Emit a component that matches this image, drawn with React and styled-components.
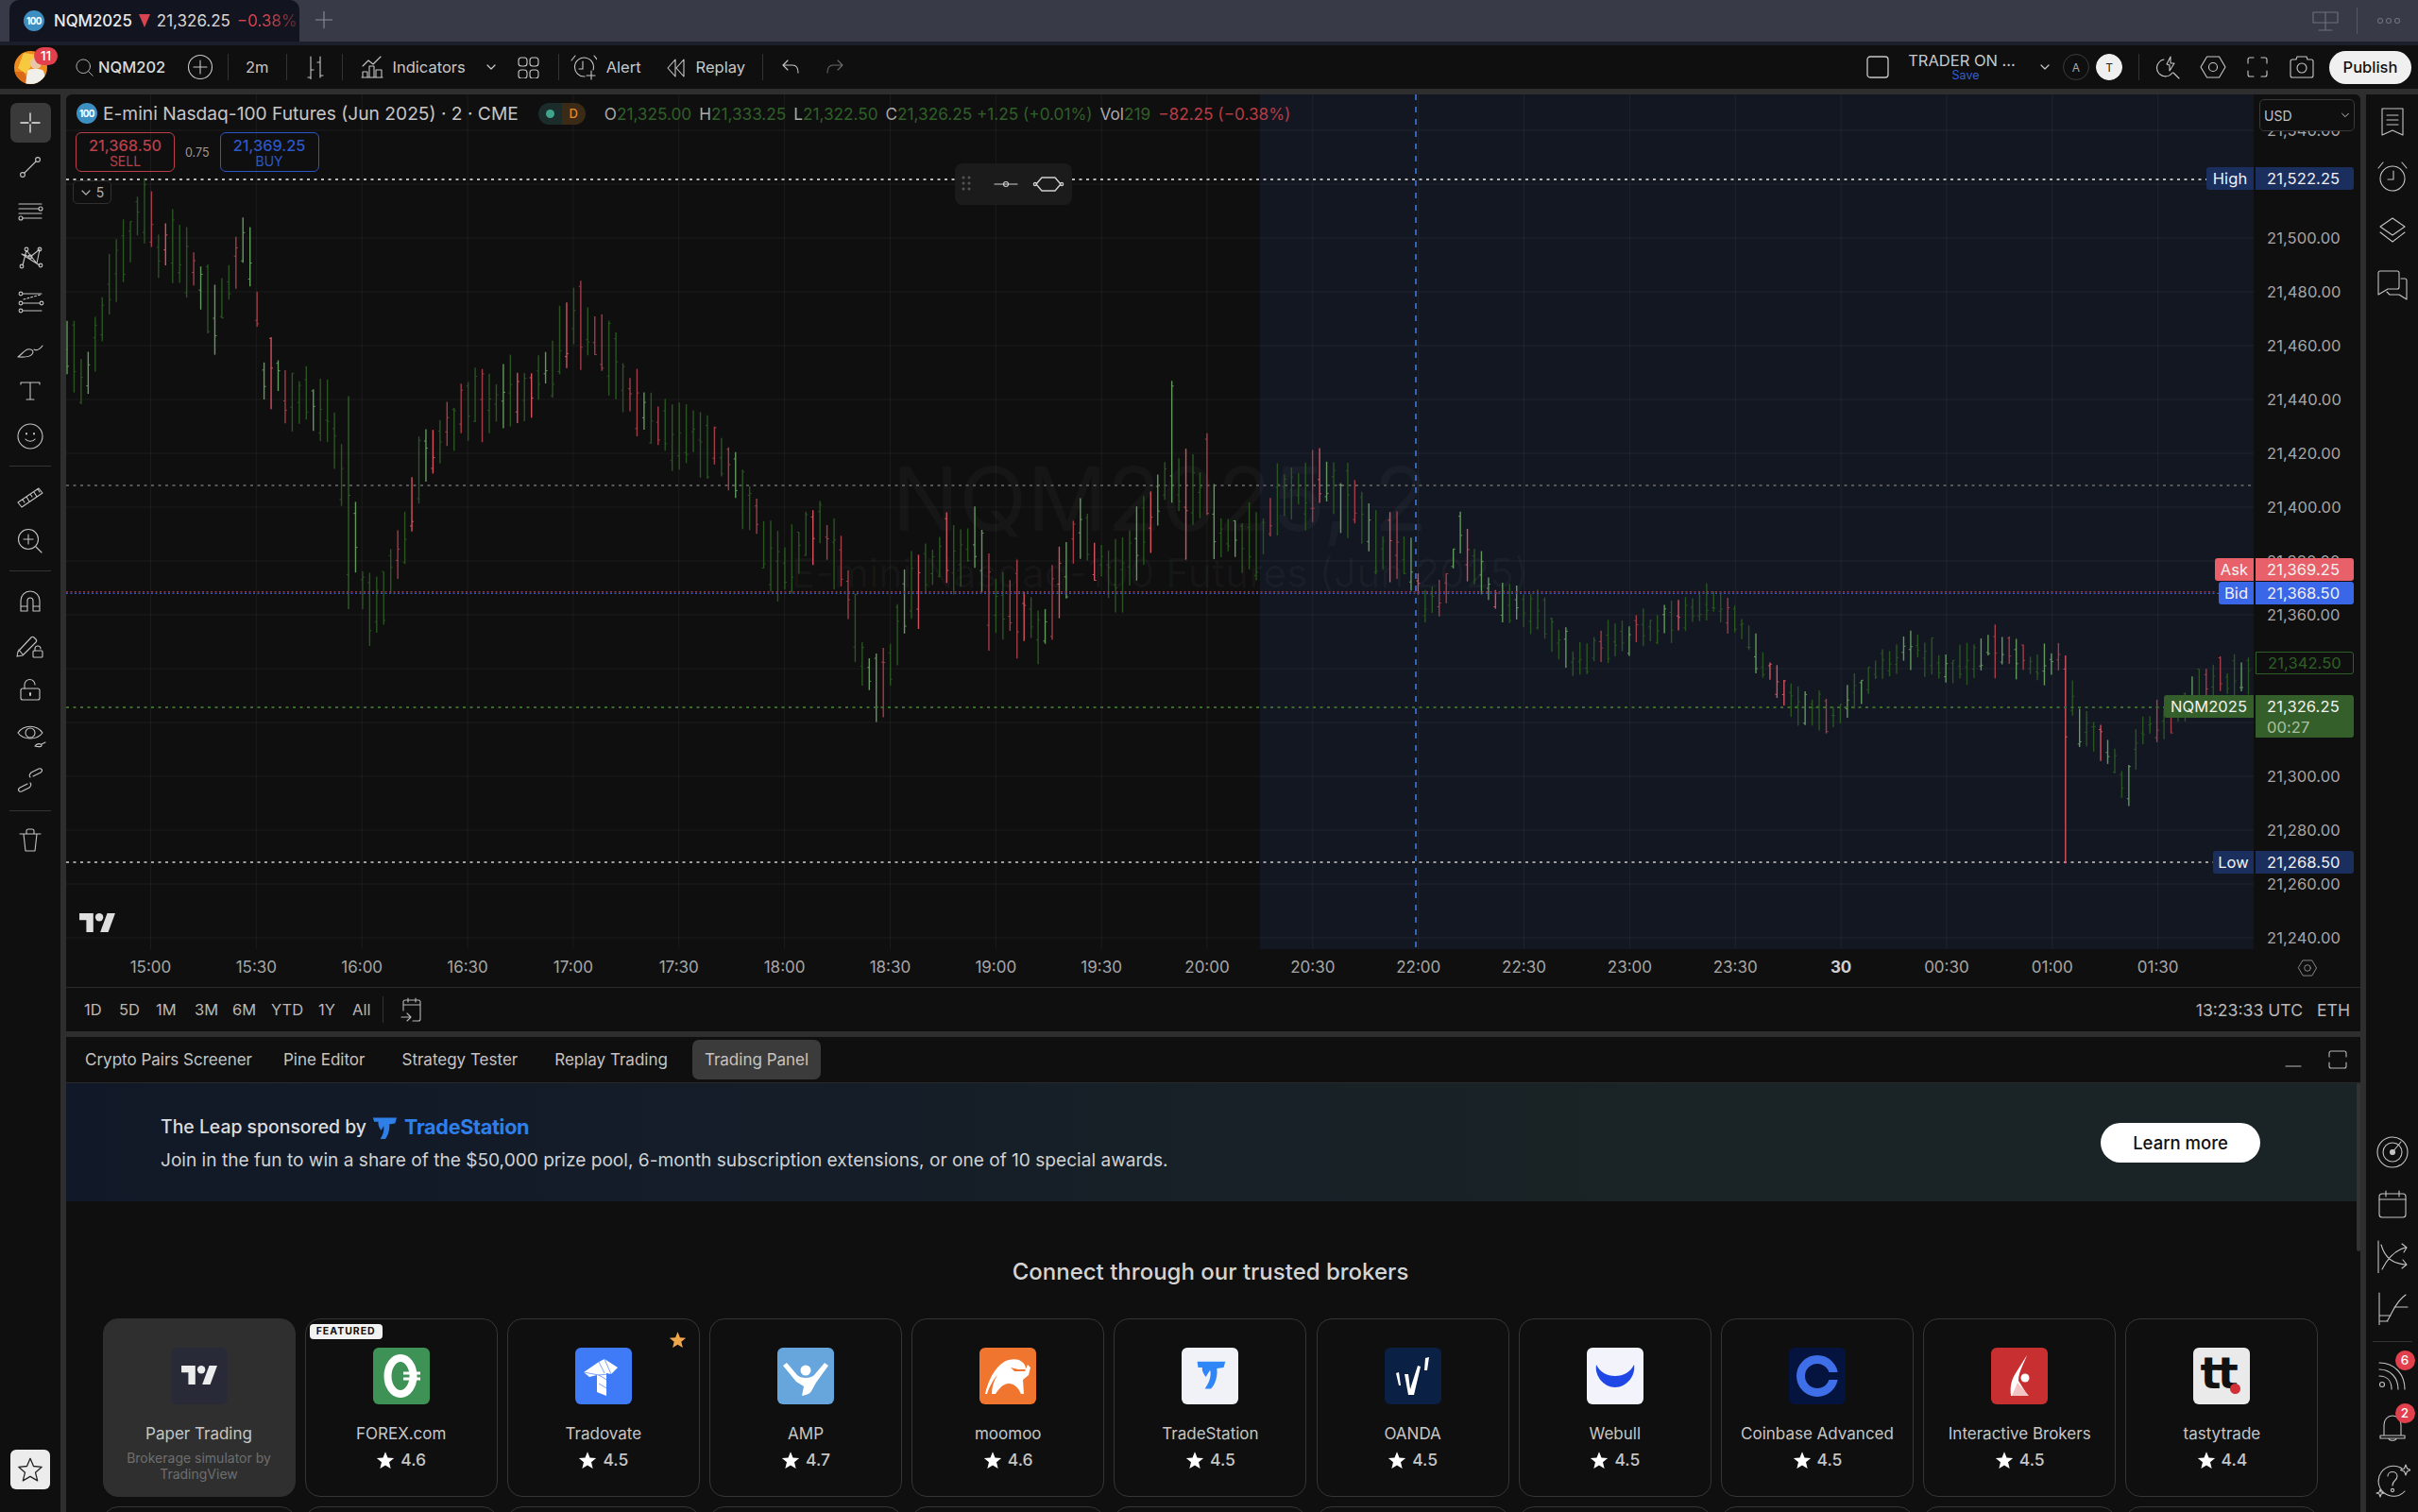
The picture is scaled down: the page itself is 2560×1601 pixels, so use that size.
import React from "react";
import styled, { createGlobalStyle } from "styled-components";

const GlobalStyle = createGlobalStyle`
  html, body { margin: 0; padding: 0; background: #2e2e2e; }
  body { font-family: Inter, "Liberation Sans", sans-serif; color: #d0d0d0; }
  * { box-sizing: border-box; }
`;

// chart scale: 57px per 20 points, 21,500 sits 152px below the top of the canvas
const priceY = (p) => 152 + ((21500 - p) / 20) * 57;
const SCALE = 2560 / 1568;

const TIMES = ["15:00","15:30","16:00","16:30","17:00","17:30","18:00","18:30","19:00","19:30","20:00","20:30","22:00","22:30","23:00","23:30","30","00:30","01:00","01:30"];
const timeX = (i) => 89.5 + i * 111.85;
const GRID_PRICES = [21540,21520,21500,21480,21460,21440,21420,21400,21380,21360,21340,21320,21300,21280,21260,21240];
const AXIS_PRICES = [21540,21500,21480,21460,21440,21420,21400,21380,21360,21300,21280,21260,21240];

// rough midline of the bars, in the 1568-wide coordinates of the reference overview
const PATH = [[43,219],[56,251],[69,196],[78,173],[93,129],[102,159],[124,170],[139,208],[147,192],[161,151],[170,239],[186,257],[213,263],[225,325],[240,400],[257,365],[266,331],[276,294],[317,255],[345,257],[375,205],[395,230],[420,270],[440,280],[465,290],[490,335],[500,366],[513,360],[519,351],[531,337],[545,360],[559,437],[571,447],[578,431],[586,392],[604,369],[633,349],[641,392],[659,396],[674,412],[686,382],[700,341],[714,366],[733,369],[751,325],[760,286],[768,326],[778,318],[792,349],[806,352],[815,353],[824,333],[842,320],[856,306],[865,320],[884,337],[898,355],[914,357],[925,396],[938,378],[947,347],[961,374],[974,392],[997,396],[1010,418],[1021,429],[1057,412],[1090,400],[1110,392],[1130,405],[1150,440],[1175,465],[1195,460],[1215,437],[1240,420],[1265,435],[1293,420],[1315,430],[1335,428],[1350,475],[1365,480],[1378,515],[1390,472],[1410,465],[1430,442],[1462,437]];
const SPIKES = [[225,257,395,"#2f5f28"],[376,182,240,"#a33d48"],[641,359,422,"#a33d48"],[659,363,427,"#a33d48"],[760,247,326,"#63985f"],[768,291,363,"#d4525f"],[782,281,334,"#a33d48"],[952,343,377,"#d4525f"],[1293,405,440,"#a33d48"],[1340,425,560,"#d4525f"]];

const interp = (x) => {
  for (let i = 1; i < PATH.length; i++) {
    if (x <= PATH[i][0]) {
      const [x0, y0] = PATH[i - 1];
      const [x1, y1] = PATH[i];
      return y0 + ((y1 - y0) * (x - x0)) / (x1 - x0);
    }
  }
  return PATH[PATH.length - 1][1];
};

const rng = (seed) => () => {
  seed |= 0; seed = (seed + 0x6d2b79f5) | 0;
  let t = Math.imul(seed ^ (seed >>> 15), 1 | seed);
  t = (t + Math.imul(t ^ (t >>> 7), 61 | t)) ^ t;
  return ((t ^ (t >>> 14)) >>> 0) / 4294967296;
};

const makeBars = () => {
  const r = rng(41);
  const out = [];
  for (let x = 1; x < 2314; x += 7.45) {
    const dx = (x + 70) / SCALE;
    const mid = interp(dx) * SCALE - 100 + (r() - 0.5) * (x < 1430 ? 24 : 12);
    const half = x < 1430 ? 16 + r() * 24 : 9 + r() * 14;
    const v = r();
    let color = v < 0.62 ? "#2a5523" : v < 0.8 ? "#63985f" : v < 0.92 ? "#a33d48" : "#d4525f";
    let top = mid - half;
    let bottom = mid + half;
    const spike = SPIKES.find((s) => Math.abs(s[0] - dx) < 2.3);
    if (spike) {
      top = spike[1] * SCALE - 100;
      bottom = spike[2] * SCALE - 100;
      color = spike[3];
    }
    const h = bottom - top;
    out.push({ x, top, bottom, color, open: top + r() * h, close: top + r() * h });
  }
  return out;
};
const BARS = makeBars();

const Page = styled.div`
  width: 2560px;
  height: 1601px;
  overflow: hidden;
  display: flex;
  flex-direction: column;
  background: #2e2e2e;
`;

const TabBar = styled.div`
  height: 44px;
  display: flex;
  align-items: flex-end;
  padding-left: 10px;
  background: #383a47;
  color: #8a8c96;
`;
const TabStrip = styled.div`
  height: 4px;
  background: #1b1e2b;
`;
const Tab = styled.div`
  width: 307px;
  height: 44px;
  display: flex;
  align-items: center;
  gap: 7px;
  padding-left: 15px;
  border-radius: 10px 10px 0 0;
  background: #12151f;
  font-size: 17px;
  color: #d8d8d8;
  white-space: nowrap;
  overflow: hidden;
`;
const TabName = styled.span`
  margin-left: 3px;
  font-weight: 500;
  font-size: 16.8px;
  color: #ececec;
`;
const TabTriangle = styled.span`
  width: 0;
  height: 0;
  border-left: 6px solid transparent;
  border-right: 6px solid transparent;
  border-top: 14px solid #d8444f;
`;
const TabChange = styled.span`
  color: transparent;
  background: linear-gradient(90deg, #d8444f 50%, #4a2a33 100%);
  -webkit-background-clip: text;
  background-clip: text;
`;
const TabPlus = styled.div`
  margin: 0 0 2px 6px;
  width: 40px;
  height: 42px;
  display: flex;
  align-items: center;
  justify-content: center;
`;
const TabBarEnd = styled.div`
  margin-left: auto;
  height: 44px;
  display: flex;
  align-items: center;
  gap: 18px;
  padding-right: 16px;
  color: #6e707c;
`;
const TabBarRule = styled.div`
  width: 1px;
  height: 28px;
  background: #565863;
`;

const Badge100 = styled.div`
  width: ${(p) => p.$size}px;
  height: ${(p) => p.$size}px;
  flex: none;
  border-radius: 50%;
  background: #3d8fc2;
  color: #fff;
  display: flex;
  align-items: center;
  justify-content: center;
  font-size: ${(p) => p.$size * 0.45}px;
  font-weight: 700;
  letter-spacing: -0.5px;
`;

const TopBar = styled.div`
  height: 46px;
  display: flex;
  align-items: center;
  justify-content: space-between;
  padding-right: 7px;
  background: #0f0f0f;
  color: #c8c8c8;
`;
const BarGroup = styled.div`
  display: flex;
  align-items: center;
  height: 100%;
`;
const BarItem = styled.div`
  display: flex;
  align-items: center;
  gap: ${(p) => p.$gap || 0}px;
  margin-left: ${(p) => p.$ml || 0}px;
  font-size: 16.5px;
  white-space: nowrap;
  color: ${(p) => (p.$dim ? "#6a6a6a" : "inherit")};
`;
const BarRule = styled.div`
  width: 1px;
  height: 28px;
  margin-left: ${(p) => p.$ml || 0}px;
  background: #333;
`;
const Avatar = styled.div`
  position: relative;
  margin-left: 15px;
  width: 35px;
  height: 35px;
  line-height: 0;
`;
const CountBadge = styled.span`
  position: absolute;
  top: ${(p) => p.$top}px;
  right: ${(p) => p.$right}px;
  min-width: ${(p) => p.$w}px;
  height: ${(p) => p.$h}px;
  padding: 0 3px;
  border-radius: 12px;
  background: #e2404c;
  color: #fff;
  font-size: 13.5px;
  font-weight: 500;
  line-height: ${(p) => p.$h}px;
  text-align: center;
`;
const SymbolName = styled.span`
  width: 72px;
  overflow: hidden;
  font-weight: 500;
  font-size: 16.5px;
  color: #dcdcdc;
`;
const LayoutName = styled.div`
  display: flex;
  flex-direction: column;
  align-items: center;
  width: 116px;
  margin-left: 18px;
  font-size: 16.5px;
  line-height: 17px;
  color: #c8c8c8;
`;
const SaveLink = styled.span`
  font-size: 12.5px;
  line-height: 13px;
  color: #2f5fd8;
  padding-left: 8px;
`;
const Round = styled.div`
  width: 28px;
  height: 28px;
  margin-left: ${(p) => p.$ml}px;
  border-radius: 50%;
  display: flex;
  align-items: center;
  justify-content: center;
  font-size: 12px;
  border: 1px solid ${(p) => (p.$on ? "#efefef" : "#3c3c3c")};
  background: ${(p) => (p.$on ? "#efefef" : "transparent")};
  color: ${(p) => (p.$on ? "#222" : "#aaa")};
`;
const PublishButton = styled.button`
  width: 87px;
  height: 35px;
  margin-left: 15px;
  border: 0;
  border-radius: 18px;
  background: #f0f0f0;
  color: #111;
  font: 500 16.5px Inter, sans-serif;
`;

const Main = styled.div`
  margin-top: 6px;
  flex: 1;
  min-height: 0;
  display: flex;
  gap: 6px;
`;

const LeftRail = styled.div`
  width: 64px;
  display: flex;
  flex-direction: column;
  align-items: center;
  gap: 5.4px;
  padding: 9px 0 24px;
  background: #0f0f0f;
  color: #c4c4c4;
`;
const RailButton = styled.div`
  width: 43px;
  height: 42px;
  flex: none;
  display: flex;
  align-items: center;
  justify-content: center;
  border-radius: 7px;
  background: ${(p) => (p.$active ? "#3a3a3a" : "transparent")};
  color: ${(p) => (p.$active ? "#ececec" : "inherit")};
`;
const RailRule = styled.div`
  width: 44px;
  height: 1px;
  flex: none;
  margin: 5px 0;
  background: #333;
`;
const FavButton = styled.div`
  margin-top: auto;
  width: 42px;
  height: 42px;
  display: flex;
  align-items: center;
  justify-content: center;
  border-radius: 6px;
  background: #ececec;
  color: #222;
`;

const Center = styled.div`
  width: 2429px;
  display: flex;
  flex-direction: column;
  gap: 6px;
`;

const ChartPanel = styled.div`
  height: 992px;
  display: flex;
  flex-direction: column;
  background: #0f0f0f;
  border-radius: 6px 6px 0 0;
  overflow: hidden;
`;
const ChartRow = styled.div`
  position: relative;
  height: 905px;
  display: flex;
`;
const Canvas = styled.div`
  position: relative;
  width: 2316px;
  height: 905px;
`;
const ChartDrawing = styled.svg`
  position: absolute;
  inset: 0;
  display: block;
`;
const Watermark = styled.text`
  font-family: Inter, sans-serif;
  font-size: ${(p) => p.$size}px;
  fill: rgba(255, 255, 255, 0.03);
  text-anchor: middle;
`;
const Legend = styled.div`
  position: absolute;
  left: 11px;
  top: 8px;
  height: 24px;
  display: flex;
  align-items: center;
  white-space: nowrap;
  font-size: 19.2px;
  color: #c6c6c6;
`;
const LegendTitle = styled.span`
  margin-left: 6px;
`;
const StatusPill = styled.div`
  display: flex;
  width: 50px;
  height: 23px;
  margin-left: 21px;
  border-radius: 12px;
  overflow: hidden;
  font-size: 13px;
  font-weight: 500;
`;
const StatusPart = styled.span`
  flex: 1;
  display: flex;
  align-items: center;
  justify-content: center;
  background: ${(p) => (p.$warn ? "#3a2a16" : "#1b2c2a")};
  color: #e28a2c;
`;
const StatusDot = styled.i`
  width: 9px;
  height: 9px;
  border-radius: 50%;
  background: #3fa58c;
`;
const Ohlc = styled.div`
  display: flex;
  margin-left: 20px;
  font-size: 17.2px;
  color: #aaa;
`;
const OhlcValue = styled.span`
  margin-right: ${(p) => p.$mr || 0}px;
  color: ${(p) => (p.$red ? "#b53c46" : "#2f5f28")};
`;
const QuoteRow = styled.div`
  position: absolute;
  left: 10px;
  top: 40px;
  display: flex;
  align-items: center;
  gap: 11px;
  font-size: 12.5px;
  color: #9a9a9a;
`;
const QuoteBox = styled.div`
  width: 105px;
  height: 42px;
  display: flex;
  flex-direction: column;
  align-items: center;
  justify-content: center;
  border: 1px solid ${(p) => p.$c};
  border-radius: 6px;
  color: ${(p) => p.$c};
  font-size: 16.3px;
  font-weight: 500;
  line-height: 18px;
`;
const QuoteCaption = styled.span`
  font-size: 14px;
  font-weight: 400;
  line-height: 15px;
`;
const Collapse = styled.div`
  position: absolute;
  left: 7px;
  top: 91px;
  width: 41px;
  height: 25px;
  display: flex;
  align-items: center;
  justify-content: center;
  gap: 5px;
  border: 1px solid #303030;
  border-radius: 5px;
  background: #0f0f0f;
  font-size: 14px;
  color: #b0b0b0;
`;
const FloatBar = styled.div`
  position: absolute;
  left: 941px;
  top: 73px;
  width: 124px;
  height: 44px;
  display: flex;
  align-items: center;
  gap: 13px;
  padding-left: 6px;
  border-radius: 8px;
  background: #1b1b1b;
  color: #d0d0d0;
`;
const GripSlot = styled.span`
  margin-right: 9px;
  line-height: 0;
`;
const TvMark = styled.div`
  position: absolute;
  left: 14px;
  top: 867px;
  color: #dedede;
  line-height: 0;
`;
const Axis = styled.div`
  position: relative;
  width: 113px;
  background: #0f0f0f;
  overflow: hidden;
`;
const AxisPrice = styled.span`
  position: absolute;
  left: 14px;
  top: ${(p) => p.$y - 11}px;
  height: 22px;
  line-height: 22px;
  font-size: 16.5px;
  letter-spacing: 0.1px;
  color: #a6a6a6;
`;
const UsdSelect = styled.div`
  position: absolute;
  left: 6px;
  top: 5px;
  z-index: 3;
  width: 101px;
  height: 34px;
  display: flex;
  align-items: center;
  justify-content: space-between;
  padding: 0 4px;
  border: 1px solid #3a3a3a;
  border-radius: 5px;
  background: #0f0f0f;
  font-size: 14px;
  color: #c4c4c4;
`;
const Tag = styled.div`
  position: absolute;
  z-index: 2;
  left: ${(p) => p.$x}px;
  top: ${(p) => p.$y}px;
  width: ${(p) => p.$w}px;
  height: ${(p) => p.$h || 24}px;
  padding: ${(p) => (p.$price ? "0 0 0 12px" : "0")};
  text-align: ${(p) => (p.$price ? "left" : "center")};
  border-radius: ${(p) => (p.$price ? "0 3px 3px 0" : "3px 0 0 3px")};
  border: ${(p) => (p.$line ? "1px solid #2f5f28" : "0")};
  background: ${(p) => p.$bg || "transparent"};
  color: ${(p) => p.$c || "#f2f2f2"};
  font-size: 16.5px;
  line-height: ${(p) => (p.$line ? "22px" : "24px")};
  letter-spacing: 0.1px;
`;
const TagSub = styled.div`
  color: #a9c2a2;
  line-height: 20px;
`;

const TimeAxis = styled.div`
  position: relative;
  height: 41px;
  border-bottom: 1px solid #2a2a2a;
`;
const TimeLabel = styled.span`
  position: absolute;
  left: ${(p) => p.$x}px;
  top: 9px;
  transform: translateX(-50%);
  font-size: 17px;
  font-weight: ${(p) => (p.$bold ? 700 : 400)};
  color: ${(p) => (p.$bold ? "#cfcfcf" : "#a6a6a6")};
`;
const AxisGear = styled.div`
  position: absolute;
  left: 2362px;
  top: 9px;
  color: #a0a0a0;
  line-height: 0;
`;
const RangeBar = styled.div`
  flex: 1;
  display: flex;
  align-items: center;
  padding: 0 11px 0 19px;
  font-size: 16.5px;
  color: #b8b8b8;
`;
const RangeItem = styled.span`
  width: ${(p) => p.$w}px;
`;
const RangeRule = styled.div`
  width: 1px;
  height: 28px;
  margin-right: 16px;
  background: #333;
`;
const RangeRight = styled.div`
  margin-left: auto;
  display: flex;
  gap: 15px;
  font-size: 17.6px;
`;

const BottomPanel = styled.div`
  position: relative;
  flex: 1;
  min-height: 0;
  display: flex;
  flex-direction: column;
  overflow: hidden;
  background: #0f0f0f;
`;
const PanelTabs = styled.div`
  height: 49px;
  flex: none;
  display: flex;
  align-items: center;
  padding-left: 7px;
  gap: 13px;
  border-bottom: 1px solid #2a2a2a;
  font-size: 17px;
  color: #c4c4c4;
`;
const PanelTab = styled.div`
  height: 42px;
  display: flex;
  align-items: center;
  padding: 0 ${(p) => p.$pr || 13}px 0 13px;
  border-radius: 7px;
  background: ${(p) => (p.$active ? "#3b3b3b" : "transparent")};
`;
const PanelActions = styled.div`
  margin-left: auto;
  display: flex;
  align-items: center;
  gap: 25px;
  padding-right: 12px;
  color: #b8b8b8;
`;
const Banner = styled.div`
  height: 125px;
  flex: none;
  display: flex;
  align-items: center;
  justify-content: space-between;
  padding: 0 106px 0 100px;
  background: linear-gradient(90deg, #111827 0%, #141d28 30%, #1a2426 70%, #1a2426 100%);
`;
const BannerText = styled.div`
  display: flex;
  flex-direction: column;
  gap: 10px;
  font-size: 19.1px;
  color: #cfd2d4;
`;
const BannerHead = styled.div`
  display: flex;
  align-items: center;
  gap: 6px;
  font-weight: 500;
  font-size: 19.4px;
  color: #dcdcdc;
`;
const Wordmark = styled.span`
  margin-left: 2px;
  font-weight: 700;
  font-size: 21.6px;
  letter-spacing: -0.3px;
  color: #2f7fe8;
`;
const LearnMore = styled.button`
  width: 169px;
  height: 42px;
  border: 0;
  border-radius: 21px;
  background: #fff;
  color: #111;
  font: 500 18.5px Inter, sans-serif;
`;
const Scroller = styled.div`
  position: absolute;
  right: 0;
  top: 49px;
  width: 4px;
  height: 178px;
  border-radius: 2px;
  background: #333;
`;
const BrokerArea = styled.div`
  flex: 1;
  min-height: 0;
  padding-top: 59px;
`;
const BrokerTitle = styled.h2`
  margin: 0 0 33px;
  padding-right: 6px;
  text-align: center;
  font-size: 24px;
  line-height: 32px;
  font-weight: 500;
  color: #d4d4d4;
`;
const BrokerGrid = styled.div`
  display: grid;
  grid-template-columns: repeat(11, 204px);
  column-gap: 10.2px;
  row-gap: 10px;
  padding-left: 38.500px;
`;
const BrokerCard = styled.div`
  position: relative;
  height: 189px;
  padding-top: 30px;
  display: flex;
  flex-direction: column;
  align-items: center;
  border-radius: 16px;
  border: 1px solid ${(p) => (p.$paper ? "#2f2f2f" : "#353535")};
  background: ${(p) => (p.$paper ? "#2f2f2f" : "transparent")};
`;
const LogoTile = styled.div`
  width: 60px;
  height: 60px;
  border-radius: 6px;
  overflow: hidden;
  line-height: 0;
  background: ${(p) => p.$bg};
`;
const BrokerName = styled.div`
  margin-top: 19px;
  font-size: 17px;
  line-height: 24px;
  color: #c6c6c6;
`;
const Rating = styled.div`
  margin-top: 4px;
  display: flex;
  align-items: center;
  gap: 6px;
  font-size: 17.5px;
  font-weight: 500;
  line-height: 24px;
  color: #c6c6c6;
`;
const PaperNote = styled.div`
  margin-top: 5px;
  text-align: center;
  font-size: 14px;
  line-height: 17px;
  color: #6e6e6e;
`;
const FeaturedChip = styled.span`
  position: absolute;
  left: 4px;
  top: 5px;
  height: 16px;
  padding: 0 7px;
  border-radius: 4px;
  background: #f2f2f2;
  color: #111;
  font-size: 10.5px;
  font-weight: 700;
  letter-spacing: 1px;
  line-height: 16px;
`;
const CornerStar = styled.span`
  position: absolute;
  right: 13px;
  top: 12px;
  line-height: 0;
`;
const TastyTile = styled.div`
  position: relative;
  height: 60px;
`;
const TastyText = styled.span`
  display: block;
  padding-left: 7px;
  font-family: "DejaVu Sans", sans-serif;
  font-size: 46px;
  font-weight: 700;
  letter-spacing: -3.5px;
  line-height: 54px;
  color: #111;
`;
const Cherry = styled.i`
  position: absolute;
  right: 10px;
  bottom: 11px;
  width: 11px;
  height: 11px;
  border-radius: 50%;
  background: #d22f36;
`;

const RightRail = styled.div`
  flex: 1;
  display: flex;
  flex-direction: column;
  justify-content: space-between;
  padding: 9px 0 11px;
  background: #0f0f0f;
  color: #c4c4c4;
`;
const RightGroup = styled.div`
  display: flex;
  flex-direction: column;
  align-items: center;
  gap: ${(p) => p.$gap}px;
`;
const RightIcon = styled.div`
  position: relative;
  width: 44px;
  height: ${(p) => p.$h || 40}px;
  display: flex;
  align-items: center;
  justify-content: center;
`;
const RightRule = styled.div`
  width: 42px;
  height: 1px;
  background: #333;
`;

const Glyph = styled.svg`
  flex: none;
  display: block;
  fill: none;
  stroke: currentColor;
  stroke-width: ${(p) => p.$sw || 1.1}px;
  stroke-linecap: round;
  stroke-linejoin: round;
`;
const Ico = ({ s = 28, sw, children, vb }) => (
  <Glyph width={s} height={s} viewBox={`0 0 ${vb || s} ${vb || s}`} $sw={sw}>
    {children}
  </Glyph>
);
const SolidStar = ({ s = 20, c = "#fff" }) => (
  <svg width={s} height={s} viewBox="0 0 24 24">
    <path fill={c} d="M12 1.500l3 7.600 8 .6-6.200 5.100 2 8-6.800-4.300-6.800 4.300 2-8L1 9.700l8-.6z" />
  </svg>
);
const TvLogo = ({ w = 38, h = 20, c = "currentColor" }) => (
  <svg width={w} height={h} viewBox="0 0 36 19">
    <path fill={c} d="M14 19H7V7H0V0h14v19zM29 19h-8L28 0h8l-7 19z" />
    <circle fill={c} cx="20" cy="4" r="4" />
  </svg>
);
const AvatarArt = () => (
  <svg width="35" height="35" viewBox="0 0 35 35">
    <defs>
      <clipPath id="avatarClip"><circle cx="17.500" cy="17.500" r="17.500" /></clipPath>
    </defs>
    <g clipPath="url(#avatarClip)">
      <rect width="35" height="35" fill="#ee8a1e" />
      <path fill="#f6c93f" d="M4 18L10 2l14 2-6 12-6 8z" />
      <path fill="#d96a16" d="M0 22h10l6 13H0z" />
      <circle cx="23" cy="13" r="6" fill="#e9c7a6" />
      <path fill="#f1efe9" d="M12 35l2-14c2-3 14-3 17 0l4 14z" />
    </g>
  </svg>
);

const CrossIcon = () => <Ico s={30} sw={1.3}><path d="M15 5v8M15 17v8M5 15h8M17 15h8" /></Ico>;
const LineIcon = () => <Ico s={30}><circle cx="7" cy="23" r="2.400" /><circle cx="23" cy="7" r="2.400" /><path d="M9 21L21 9" /></Ico>;
const ChannelIcon = () => <Ico s={32}><path d="M4 7h24M4 12h21M4 17h24M8 22h20" /><circle cx="27" cy="12" r="2" /><circle cx="6" cy="22" r="2" /></Ico>;
const PatternIcon = () => <Ico s={32}><path d="M8 25l4-16 11 14 3-15-10 8-9-3 19 12" /><circle cx="7" cy="26" r="1.900" /><circle cx="12" cy="8" r="1.900" /><circle cx="16" cy="16" r="1.900" /><circle cx="26" cy="8" r="1.900" /><circle cx="27" cy="25" r="1.900" /></Ico>;
const FibIcon = () => <Ico s={32}><path d="M8 7h20M8 25h20M8 17h18" /><path d="M9 13l18-5" strokeDasharray="2 2" /><circle cx="6" cy="7" r="1.900" /><circle cx="6" cy="17" r="1.900" /><circle cx="28" cy="17" r="1.900" /><circle cx="6" cy="25" r="1.900" /></Ico>;
const BrushIcon = () => <Ico s={32}><path d="M3 27c5 0 12 1 15-3s-2-6-5-5-6 5-10 8zM20 19c3 2 7-1 9-4" /></Ico>;
const TextIcon = () => <Ico s={30}><path d="M5 8V6h20v2M15 6v18M11 24h8" /></Ico>;
const SmileIcon = () => <Ico s={32}><circle cx="16" cy="16" r="13" /><path d="M11 19c2 3 8 3 10 0" /><path d="M12 13v.5M20 13v.5" strokeWidth="2" /></Ico>;
const RulerIcon = () => <Ico s={34}><path d="M4 23L26 8l4 5-22 15zM9 20l2 3M13 17l3 5M17 14l2 3M21 12l3 5M25 9l2 3" /></Ico>;
const ZoomIcon = () => <Ico s={32}><circle cx="14" cy="14" r="10.500" /><path d="M14 9v10M9 14h10M22 22l6 6" /></Ico>;
const MagnetIcon = () => <Ico s={30}><path d="M5 25V14a10 10 0 0 1 20 0v11h-7V14a3 3 0 0 0-6 0v11zM5 20h7M18 20h7" /></Ico>;
const PencilLockIcon = () => <Ico s={32}><path d="M3 22l-1 5 6-1L22 12c1-1 1-2 0-3l-2-2c-1-1-2-1-3 0zM4 20l4 5" /><rect x="19" y="21" width="10" height="7" rx="1" /><path d="M21 21v-2a3 3 0 0 1 6 0" /></Ico>;
const LockIcon = () => <Ico s={30}><rect x="5" y="13" width="20" height="12" rx="2" /><path d="M9 13V9a5.500 5.500 0 0 1 11 0" /><path d="M15 18v2" strokeWidth="2" /></Ico>;
const EyeIcon = () => <Ico s={34}><path d="M4 14c6-9 20-9 26 0-6 8-20 8-26 0z" /><circle cx="17" cy="14" r="5" /><path d="M22 28c2-3 6-3 7-1s-4 2-7 1zM29 26l4-2" /></Ico>;
const LinkIcon = () => <Ico s={32}><path d="M13 20l-8 4c-3 2-1 5 2 4l8-4c2-2 2-4 1-5M19 12l8-4c3-2 1-5-2-4l-8 4c-2 2-2 4-1 5" /></Ico>;
const TrashIcon = () => <Ico s={30}><path d="M4 8h22M8 8l2 18h10l2-18M11 8V5c0-1 1-2 2-2h4c1 0 2 1 2 2v3" /></Ico>;
const StarOutline = () => <Ico s={28} vb={24}><path d="M12 2l3 7 7.500.7-5.800 5 1.900 7.500L12 18.300l-6.600 3.900 1.900-7.500-5.800-5L9 9z" /></Ico>;

const SearchIcon = () => <Ico s={20} vb={26}><circle cx="12" cy="12" r="9.500" /><path d="M19 19l6 6" /></Ico>;
const PlusCircle = () => <Ico s={28}><circle cx="14" cy="14" r="12.500" /><path d="M14 7v14M7 14h14" /></Ico>;
const BarsIcon = () => <Ico s={26}><path d="M9 2v24M6 24h3M9 16h3M19 2v22M16 8h3M19 22h3" /></Ico>;
const IndicatorsIcon = () => <Ico s={26}><path d="M3 12l6-6 5 4 8-8M3 24v-6h5v6M10 24V12h5v12M17 24v-8h6v8M2 24h22" /></Ico>;
const Chevron = ({ s = 12 }) => <Ico s={s} vb={12} sw={1.2}><path d="M2 4l4 4 4-4" /></Ico>;
const GridIcon = () => <Ico s={24}><rect x="2" y="2" width="9" height="9" rx="3" /><rect x="14" y="2" width="9" height="9" rx="3" /><rect x="2" y="15" width="9" height="9" rx="3" /><rect x="14" y="15" width="9" height="9" rx="3" /></Ico>;
const AlertIcon = () => <Ico s={28}><path d="M15 24a10 10 0 1 1 9-7M13 8v8h-4M1 7l4-5M25 2l4 5M22 18v9M17 23h9" /></Ico>;
const ReplayIcon = () => <Ico s={24}><path d="M11 4L3 13l8 9zM20 4l-8 9 8 9z" /></Ico>;
const UndoIcon = () => <Ico s={24}><path d="M9 5L4 10l5 5M4 10h10c4 0 6 3 6 8" /></Ico>;
const RedoIcon = () => <Ico s={24}><path d="M15 5l5 5-5 5M20 10H10c-4 0-6 3-6 8" /></Ico>;
const SquareIcon = () => <Ico s={26}><rect x="2" y="2" width="22" height="22" rx="3" strokeWidth="1.300" /></Ico>;
const BoltSearch = () => <Ico s={26}><path d="M9 5a9 9 0 1 0 9 14M12 10l4-8v7h4l-5 8v-6zM19 19l6 6" /></Ico>;
const HexIcon = ({ s = 30 }) => <Ico s={s} vb={30}><path d="M8.500 4h13L28 15l-6.500 11h-13L2 15z" /><circle cx="15" cy="15" r="4.500" /></Ico>;
const FullIcon = () => <Ico s={24}><path d="M2 8V4c0-1 1-2 2-2h4M16 2h4c1 0 2 1 2 2v4M22 16v4c0 1-1 2-2 2h-4M8 22H4c-1 0-2-1-2-2v-4" /></Ico>;
const CameraIcon = () => <Ico s={28}><path d="M2 8c0-1 1-2 2-2h4l1-3h10l1 3h4c1 0 2 1 2 2v15c0 1-1 2-2 2H4c-1 0-2-1-2-2z" /><circle cx="14" cy="15" r="5" /></Ico>;
const ScreenIcon = () => <Ico s={30}><path d="M2 6h26v11H2zM15 6v19M8 25h14" /></Ico>;
const DotsIcon = () => <Ico s={30}><circle cx="6" cy="15" r="2.500" /><circle cx="15" cy="15" r="2.500" /><circle cx="24" cy="15" r="2.500" /></Ico>;
const PlusThin = () => <Ico s={22} vb={28}><path d="M14 3v22M3 14h22" strokeWidth="1.400" /></Ico>;
const GripIcon = () => <svg width="12" height="20" viewBox="0 0 12 20"><g fill="#555">{[2,8,14].map((y) => <React.Fragment key={y}><circle cx="3" cy={y + 1} r="1.500" /><circle cx="9" cy={y + 1} r="1.500" /></React.Fragment>)}</g></svg>;
const DotLineIcon = () => <Ico s={28}><path d="M2 14h24" /><circle cx="14" cy="14" r="2.500" /></Ico>;
const NodeIcon = () => <Ico s={36} sw={1.4}><path d="M5 18l6-7h14l6 7-6 7H11z" /><circle cx="4" cy="18" r="1.600" /><circle cx="32" cy="18" r="1.600" /></Ico>;
const CalendarGoIcon = () => <Ico s={28}><path d="M5 15V6c0-1 1-2 2-2h14c1 0 2 1 2 2v18c0 1-1 2-2 2h-6M5 9h18M10 2v4M18 2v4M3 22h9M9 18l4 4-4 4" /></Ico>;
const MinIcon = () => <Ico s={20}><path d="M2 17h16" /></Ico>;
const MaxIcon = () => <Ico s={24}><path d="M3 9V5c0-1 1-2 2-2h14c1 0 2 1 2 2v4M3 15v4c0 1 1 2 2 2h14c1 0 2-1 2-2v-4" /></Ico>;

const BookmarkIcon = () => <Ico s={34}><path d="M6 3h22v28l-11-5-11 5zM11 10h12M11 15h12M11 20h12" /></Ico>;
const ClockIcon = () => <Ico s={36}><circle cx="18" cy="20" r="13" /><path d="M19 12v9h-6M3 9l5-6M33 9l-5-6" /></Ico>;
const LayersIcon = () => <Ico s={34}><path d="M17 4l13 9-13 9-13-9zM4 19l13 10 13-10" /></Ico>;
const ChatIcon = () => <Ico s={36}><path d="M3 5c0-1 1-2 2-2h18c1 0 2 1 2 2v15c0 1-1 2-2 2H13l-10 6zM27 11h4c1 0 2 1 2 2v20l-8-5H15l-3-3" /></Ico>;
const RadarIcon = () => <Ico s={36}><circle cx="18" cy="18" r="16" /><circle cx="18" cy="18" r="10" /><circle cx="18" cy="18" r="2.500" fill="currentColor" /><path d="M18 18l9-11" /></Ico>;
const CalendarIcon = () => <Ico s={34}><rect x="3" y="6" width="28" height="25" rx="3" /><path d="M3 12h28M10 3v6M24 3v6" /></Ico>;
const CrossArrowsIcon = () => <Ico s={36}><path d="M3 2v34M6 6c4 14 12 20 26 21M32 9C20 12 12 22 7 32M28 5l5 4-3 5M29 22l4 5-5 4" /></Ico>;
const OptionsIcon = () => <Ico s={36}><path d="M4 2v34M4 26h12M4 32h9M12 32c4-4 8-20 20-28M20 17h14" /></Ico>;
const RssIcon = () => <Ico s={36}><circle cx="7" cy="28" r="2.500" /><path d="M4 19c8 0 13 5 13 14M4 12c12 0 20 9 20 21M4 5c16 0 27 12 27 28" /></Ico>;
const BellIcon = () => <Ico s={34}><path d="M8 26V15c0-6 4-10 9-10s9 4 9 10v11M4 26h26v3H4zM13 29c0 3 8 3 8 0" /></Ico>;
const HelpIcon = () => <Ico s={38}><path d="M29 6a16 16 0 1 0 3 24M14 14c0-6 10-6 10 0 0 5-5 4-5 10" /><circle cx="19" cy="29" r="1.600" /><path d="M33 2l1.500 4 4 1.500-4 1.500-1.500 4-1.500-4-4-1.500 4-1.500zM6 28l1 3 3 1-3 1-1 3-1-3-3-1 3-1z" /></Ico>;

const LogoSvg = ({ children }) => <svg width="60" height="60" viewBox="0 0 60 60">{children}</svg>;
const Logos = {
  paper: <LogoSvg><g transform="translate(11,19)"><TvLogo w={38} h={20} c="#ececec" /></g></LogoSvg>,
  forex: <LogoSvg><ellipse cx="29" cy="30" rx="13.500" ry="19" fill="none" stroke="#fff" strokeWidth="8" /><path d="M32 27h18M32 33h18" stroke="#fff" strokeWidth="3" /></LogoSvg>,
  tradovate: <LogoSvg><path fill="#fff" d="M9 26l16-11 6-3 14 9-7 7-5-1v24l-10-4V29l-8 2z" /><path fill="none" stroke="#3f7bf6" strokeWidth=".7" d="M25 15l6 12M31 12l7 16M25 29l10 6M25 38l10 6M25 29l10-1M9 26l16 3" /></LogoSvg>,
  amp: <LogoSvg><circle cx="30" cy="24" r="5.500" fill="#fff" /><path fill="#fff" d="M6 19l4-3 11 13c4 4 14 4 18 0L50 16l4 3-13 18-5 9c-1 2-3 3-6 4l-4 1 2-10-8-5z" /></LogoSvg>,
  moomoo: <LogoSvg><path fill="#fff" d="M6 49C9 36 15 22 26 15c6-3 14-4 19 0 3 2 4 5 4 8h-8l-8-2 4 4h11l3-7 3 3-2 8-6 5 1 15h-3c-3-7-7-11-13-11s-10 5-14 11h-4c0-7 2-14 6-20-5 5-9 14-11 20z" /></LogoSvg>,
  tradestation: <LogoSvg><path fill="#2f86f6" d="M14 23h33l-2 7-8 1c1 8-1 18-7 24h-7c5-7 8-15 6-22l-5 8c-3-4-5-8-4-11h-5z" transform="translate(4 -6) scale(.9)" /></LogoSvg>,
  oanda: <LogoSvg><path fill="#fff" d="M12 27l3-1 2 14h-2zM21 28h4l2 16 8-25 3 1-7 30h-6zM43 11l4-1-2 14h-3z" /></LogoSvg>,
  webull: <LogoSvg><path fill="#1f47e6" d="M10 18c4 8 11 12 20 12s16-4 20-12c2 12-8 24-20 24S8 30 10 18z" /></LogoSvg>,
  coinbase: <LogoSvg><circle cx="30" cy="30" r="17.500" fill="none" stroke="#3f6fe8" strokeWidth="9" /><path fill="#05133f" d="M36 26h16v8H36z" /></LogoSvg>,
  ib: <LogoSvg><path fill="#fff" d="M38 8L26 27c-5 8-6 15-5 24l18 0-10-16c0-10 6-18 9-27z" /><circle cx="36" cy="32" r="4.500" fill="#fff" /><path fill="#f3c4c4" d="M22 51l6-14 12 14z" /></LogoSvg>,
  tasty: <TastyTile><TastyText>tt</TastyText><Cherry /></TastyTile>,
};

const BROKERS = [
  { name: "Paper Trading", logo: "paper", bg: "#282a38", paper: true },
  { name: "FOREX.com", logo: "forex", bg: "#3f9255", rating: "4.6", featured: true },
  { name: "Tradovate", logo: "tradovate", bg: "#3f7bf6", rating: "4.5", starred: true },
  { name: "AMP", logo: "amp", bg: "#67a5dd", rating: "4.7" },
  { name: "moomoo", logo: "moomoo", bg: "#f0762f", rating: "4.6" },
  { name: "TradeStation", logo: "tradestation", bg: "#f0f2f8", rating: "4.5" },
  { name: "OANDA", logo: "oanda", bg: "#0a2045", rating: "4.5" },
  { name: "Webull", logo: "webull", bg: "#f2f3fb", rating: "4.5" },
  { name: "Coinbase Advanced", logo: "coinbase", bg: "#05133f", rating: "4.5" },
  { name: "Interactive Brokers", logo: "ib", bg: "#c82f30", rating: "4.5" },
  { name: "tastytrade", logo: "tasty", bg: "#eaeaea", rating: "4.4" },
];

const Chart = () => (
  <ChartDrawing width="2316" height="905" viewBox="0 0 2316 905">
    <rect x="1264" y="0" width="1052" height="905" fill="#121722" />
    {GRID_PRICES.map((p) => (
      <line key={p} x1="0" x2="2316" y1={priceY(p)} y2={priceY(p)} stroke="#fff" strokeOpacity="0.055" />
    ))}
    {TIMES.map((t, i) => (
      <line key={t} x1={timeX(i)} x2={timeX(i)} y1="0" y2="905" stroke="#fff" strokeOpacity="0.055" />
    ))}
    <Watermark $size={94} x="1158" y="462">NQM2025, 2</Watermark>
    <Watermark $size={42.5} x="1158" y="522">E-mini Nasdaq-100 Futures (Jun 2025)</Watermark>
    <line x1="0" x2="2266" y1="90" y2="90" stroke="#b8b8b8" strokeWidth="2" strokeDasharray="3 4.5" />
    <line x1="0" x2="2316" y1="414" y2="414" stroke="#565656" strokeWidth="2" strokeDasharray="3 4.5" />
    <line x1="0" x2="2273" y1="813" y2="813" stroke="#a0a0a0" strokeWidth="2" strokeDasharray="3 4.5" />
    {BARS.map((b) => (
      <g key={b.x} stroke={b.color}>
        <line x1={b.x} x2={b.x} y1={b.top} y2={b.bottom} strokeWidth="1.400" />
        <line x1={b.x - 2} x2={b.x} y1={b.open} y2={b.open} strokeWidth="1" />
        <line x1={b.x} x2={b.x + 2} y1={b.close} y2={b.close} strokeWidth="1" />
      </g>
    ))}
    <line x1="0" x2="2275" y1="526.8" y2="526.8" stroke="#9c3442" strokeWidth="1.400" strokeDasharray="2 2.500" />
    <line x1="0" x2="2279" y1="528.4" y2="528.4" stroke="#2f55c8" strokeWidth="1.400" strokeDasharray="2 2.500" />
    <line x1="0" x2="2221" y1="649" y2="649" stroke="#3a6b2d" strokeWidth="2" strokeDasharray="3 4.500" />
    <line x1="1429" x2="1429" y1="0" y2="905" stroke="#3f78dc" strokeWidth="1.600" strokeDasharray="6 7" />
  </ChartDrawing>
);

const LEFT_TOOLS = [
  [<CrossIcon />, <LineIcon />, <ChannelIcon />, <PatternIcon />, <FibIcon />, <BrushIcon />, <TextIcon />, <SmileIcon />],
  [<RulerIcon />, <ZoomIcon />],
  [<MagnetIcon />, <PencilLockIcon />, <LockIcon />, <EyeIcon />, <LinkIcon />],
  [<TrashIcon />],
];

export default function App() {
  return (
    <Page>
      <GlobalStyle />
      <TabBar>
        <Tab>
          <Badge100 $size={22}>100</Badge100>
          <TabName>NQM2025</TabName>
          <TabTriangle />
          <span>21,326.25</span>
          <TabChange>−0.38%</TabChange>
        </Tab>
        <TabPlus><PlusThin /></TabPlus>
        <TabBarEnd>
          <ScreenIcon />
          <TabBarRule />
          <DotsIcon />
        </TabBarEnd>
      </TabBar>
      <TabStrip />
      <TopBar>
        <BarGroup>
          <Avatar>
            <AvatarArt />
            <CountBadge $top={-4} $right={-11} $h={19} $w={25}>11</CountBadge>
          </Avatar>
          <BarItem $ml={29}><SearchIcon /></BarItem>
          <BarItem $ml={5}><SymbolName>NQM2025</SymbolName></BarItem>
          <BarItem $ml={22}><PlusCircle /></BarItem>
          <BarRule $ml={15} />
          <BarItem $ml={18}>2m</BarItem>
          <BarRule $ml={18} />
          <BarItem $ml={16}><BarsIcon /></BarItem>
          <BarRule $ml={16} />
          <BarItem $ml={18} $gap={9}><IndicatorsIcon />Indicators</BarItem>
          <BarItem $ml={21}><Chevron /></BarItem>
          <BarItem $ml={21}><GridIcon /></BarItem>
          <BarRule $ml={20} />
          <BarItem $ml={12} $gap={10}><AlertIcon />Alert</BarItem>
          <BarItem $ml={25} $gap={9}><ReplayIcon />Replay</BarItem>
          <BarRule $ml={18} />
          <BarItem $ml={17}><UndoIcon /></BarItem>
          <BarItem $ml={23} $dim><RedoIcon /></BarItem>
        </BarGroup>
        <BarGroup>
          <SquareIcon />
          <LayoutName>
            TRADER ON ...
            <SaveLink>Save</SaveLink>
          </LayoutName>
          <BarItem $ml={24}><Chevron /></BarItem>
          <Round $ml={13}>A</Round>
          <Round $ml={7} $on>T</Round>
          <BarRule $ml={17} />
          <BarItem $ml={17}><BoltSearch /></BarItem>
          <BarItem $ml={20}><HexIcon /></BarItem>
          <BarItem $ml={20}><FullIcon /></BarItem>
          <BarItem $ml={21}><CameraIcon /></BarItem>
          <PublishButton>Publish</PublishButton>
        </BarGroup>
      </TopBar>
      <Main>
        <LeftRail>
          {LEFT_TOOLS.map((group, g) => (
            <React.Fragment key={g}>
              {g > 0 && <RailRule />}
              {group.map((icon, i) => (
                <RailButton key={i} $active={g === 0 && i === 0}>{icon}</RailButton>
              ))}
            </React.Fragment>
          ))}
          <FavButton><StarOutline /></FavButton>
        </LeftRail>

        <Center>
          <ChartPanel>
            <ChartRow>
              <Canvas>
                <Chart />
                <Legend>
                  <Badge100 $size={22}>100</Badge100>
                  <LegendTitle>E-mini Nasdaq-100 Futures (Jun 2025) · 2 · CME</LegendTitle>
                  <StatusPill>
                    <StatusPart><StatusDot /></StatusPart>
                    <StatusPart $warn>D</StatusPart>
                  </StatusPill>
                  <Ohlc>
                    O<OhlcValue $mr={8}>21,325.00</OhlcValue>
                    H<OhlcValue $mr={8}>21,333.25</OhlcValue>
                    L<OhlcValue $mr={8}>21,322.50</OhlcValue>
                    C<OhlcValue $mr={8}>21,326.25 +1.25 (+0.01%)</OhlcValue>
                    Vol<OhlcValue $mr={8}>219</OhlcValue>
                    <OhlcValue $red>−82.25 (−0.38%)</OhlcValue>
                  </Ohlc>
                </Legend>
                <QuoteRow>
                  <QuoteBox $c="#b8404a">21,368.50<QuoteCaption>SELL</QuoteCaption></QuoteBox>
                  <span>0.75</span>
                  <QuoteBox $c="#2c57c8">21,369.25<QuoteCaption>BUY</QuoteCaption></QuoteBox>
                </QuoteRow>
                <Collapse><Chevron />5</Collapse>
                <FloatBar>
                  <GripSlot><GripIcon /></GripSlot>
                  <DotLineIcon />
                  <NodeIcon />
                </FloatBar>
                <TvMark><TvLogo /></TvMark>
                <Tag $x={2266} $y={77} $w={50} $bg="#1b2f5e">High</Tag>
                <Tag $x={2275} $y={491} $w={41} $bg="#e8616a">Ask</Tag>
                <Tag $x={2279} $y={516} $w={37} $bg="#3a66e8">Bid</Tag>
                <Tag $x={2221} $y={636} $w={95} $bg="#355f2a">NQM2025</Tag>
                <Tag $x={2273} $y={801} $w={43} $bg="#1b2f5e">Low</Tag>
              </Canvas>
              <Axis>
                {AXIS_PRICES.map((p) => (
                  <AxisPrice key={p} $y={priceY(p)}>{p.toLocaleString("en-US")}.00</AxisPrice>
                ))}
                <UsdSelect>USD<Chevron s={10} /></UsdSelect>
                <Tag $price $x={2} $y={77} $w={104} $bg="#1b2f5e">21,522.25</Tag>
                <Tag $price $x={2} $y={491} $w={104} $bg="#e8616a">21,369.25</Tag>
                <Tag $price $x={2} $y={516} $w={104} $bg="#3a66e8">21,368.50</Tag>
                <Tag $price $line $x={2} $y={590} $w={104} $c="#2f5f28">21,342.50</Tag>
                <Tag $price $x={2} $y={636} $w={104} $h={45} $bg="#355f2a">21,326.25<TagSub>00:27</TagSub></Tag>
                <Tag $price $x={2} $y={801} $w={104} $bg="#1b2f5e">21,268.50</Tag>
              </Axis>
            </ChartRow>
            <TimeAxis>
              {TIMES.map((t, i) => (
                <TimeLabel key={t} $x={timeX(i)} $bold={t === "30"}>{t}</TimeLabel>
              ))}
              <AxisGear><HexIcon s={22} /></AxisGear>
            </TimeAxis>
            <RangeBar>
              <RangeItem $w={37}>1D</RangeItem>
              <RangeItem $w={39}>5D</RangeItem>
              <RangeItem $w={41}>1M</RangeItem>
              <RangeItem $w={40}>3M</RangeItem>
              <RangeItem $w={41}>6M</RangeItem>
              <RangeItem $w={50}>YTD</RangeItem>
              <RangeItem $w={36}>1Y</RangeItem>
              <RangeItem $w={32}>All</RangeItem>
              <RangeRule />
              <CalendarGoIcon />
              <RangeRight>
                <span>13:23:33 UTC</span>
                <span>ETH</span>
              </RangeRight>
            </RangeBar>
          </ChartPanel>

          <BottomPanel>
            <PanelTabs>
              <PanelTab $pr={7}>Crypto Pairs Screener</PanelTab>
              <PanelTab>Pine Editor</PanelTab>
              <PanelTab>Strategy Tester</PanelTab>
              <PanelTab>Replay Trading</PanelTab>
              <PanelTab $active>Trading Panel</PanelTab>
              <PanelActions><MinIcon /><MaxIcon /></PanelActions>
            </PanelTabs>
            <Banner>
              <BannerText>
                <BannerHead>
                  The Leap sponsored by
                  <Ico s={26} vb={60}><path fill="#2f7fe8" stroke="none" d="M2 8h58l-4 14-14 2c1 12-2 26-10 36H20c7-11 10-22 8-32l-6 11c-5-6-8-14-7-21H5z" /></Ico>
                  <Wordmark>TradeStation</Wordmark>
                </BannerHead>
                <span>Join in the fun to win a share of the $50,000 prize pool, 6-month subscription extensions, or one of 10 special awards.</span>
              </BannerText>
              <LearnMore>Learn more</LearnMore>
            </Banner>
            <Scroller />
            <BrokerArea>
              <BrokerTitle>Connect through our trusted brokers</BrokerTitle>
              <BrokerGrid>
                {BROKERS.map((b) => (
                  <BrokerCard key={b.name} $paper={b.paper}>
                    {b.featured && <FeaturedChip>FEATURED</FeaturedChip>}
                    {b.starred && <CornerStar><SolidStar s={19} c="#f0a64a" /></CornerStar>}
                    <LogoTile $bg={b.bg}>{Logos[b.logo]}</LogoTile>
                    <BrokerName>{b.name}</BrokerName>
                    {b.rating ? (
                      <Rating><SolidStar />{b.rating}</Rating>
                    ) : (
                      <PaperNote>Brokerage simulator by<br />TradingView</PaperNote>
                    )}
                  </BrokerCard>
                ))}
                {BROKERS.map((b) => <BrokerCard key={`next-${b.name}`} />)}
              </BrokerGrid>
            </BrokerArea>
          </BottomPanel>
        </Center>

        <RightRail>
          <RightGroup $gap={17.500}>
            <RightIcon><BookmarkIcon /></RightIcon>
            <RightIcon><ClockIcon /></RightIcon>
            <RightIcon><LayersIcon /></RightIcon>
            <RightIcon><ChatIcon /></RightIcon>
          </RightGroup>
          <RightGroup $gap={15}>
            <RightIcon><RadarIcon /></RightIcon>
            <RightIcon><CalendarIcon /></RightIcon>
            <RightIcon><CrossArrowsIcon /></RightIcon>
            <RightIcon><OptionsIcon /></RightIcon>
            <RightRule />
            <RightIcon><RssIcon /><CountBadge $top={-6} $right={-2} $h={21} $w={21}>6</CountBadge></RightIcon>
            <RightIcon><BellIcon /><CountBadge $top={-5} $right={-2} $h={21} $w={21}>2</CountBadge></RightIcon>
            <RightIcon $h={44}><HelpIcon /></RightIcon>
          </RightGroup>
        </RightRail>
      </Main>
    </Page>
  );
}
